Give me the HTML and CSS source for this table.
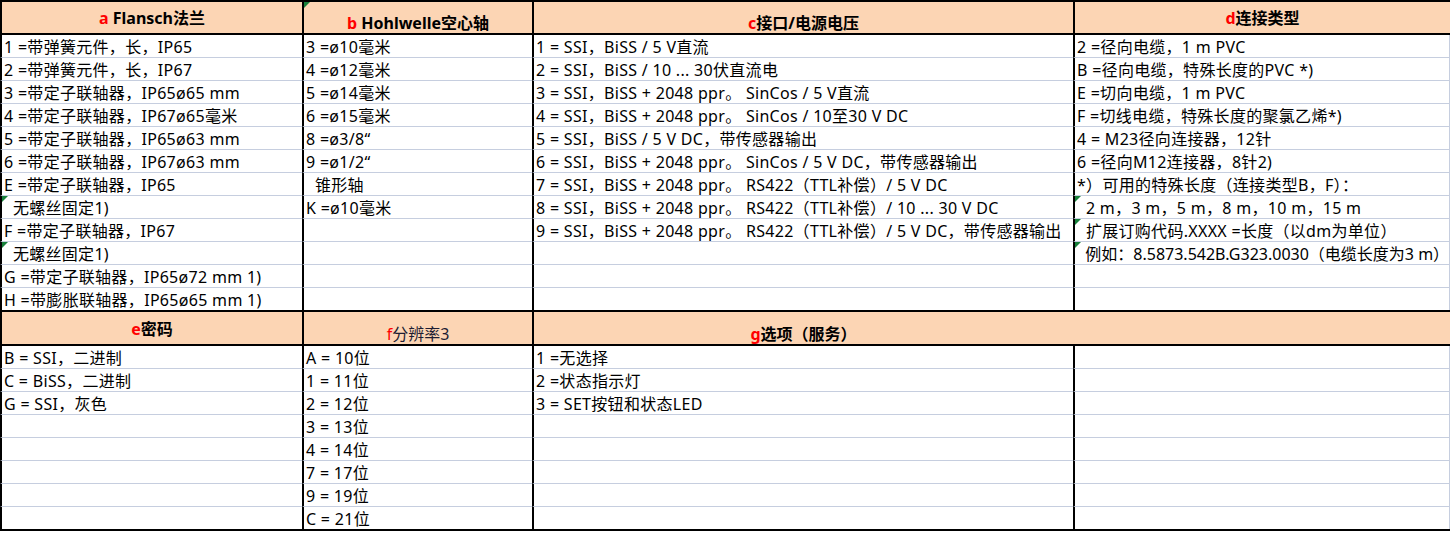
FILE: index.html
```html
<!DOCTYPE html>
<html lang="zh">
<head>
<meta charset="utf-8">
<title>Sheet</title>
<link rel="stylesheet" href="styles.css">
</head>
<body>
<div class="sheet">
  <div class="block top">
    <div class="col">
      <div class="hd mid"><span class="key">a</span>&nbsp;Flansch法兰</div>
      <div class="c">1 =带弹簧元件，长，IP65</div>
      <div class="c">2 =带弹簧元件，长，IP67</div>
      <div class="c">3 =带定子联轴器，IP65ø65 mm</div>
      <div class="c">4 =带定子联轴器，IP67ø65毫米</div>
      <div class="c">5 =带定子联轴器，IP65ø63 mm</div>
      <div class="c">6 =带定子联轴器，IP67ø63 mm</div>
      <div class="c">E =带定子联轴器，IP65</div>
      <div class="c flag">  无螺丝固定1)</div>
      <div class="c">F =带定子联轴器，IP67</div>
      <div class="c flag">  无螺丝固定1)</div>
      <div class="c">G =带定子联轴器，IP65ø72 mm 1)</div>
      <div class="c">H =带膨胀联轴器，IP65ø65 mm 1)</div>
    </div>
    <div class="col">
      <div class="hd low flag"><span class="key">b</span>&nbsp;Hohlwelle空心轴</div>
      <div class="c">3 =ø10毫米</div>
      <div class="c">4 =ø12毫米</div>
      <div class="c">5 =ø14毫米</div>
      <div class="c">6 =ø15毫米</div>
      <div class="c">8 =ø3/8“</div>
      <div class="c">9 =ø1/2“</div>
      <div class="c">  锥形轴</div>
      <div class="c">K =ø10毫米</div>
      <div class="c"></div>
      <div class="c"></div>
      <div class="c"></div>
      <div class="c"></div>
    </div>
    <div class="col">
      <div class="hd low"><span class="key">c</span>接口/电源电压</div>
      <div class="c">1 = SSI，BiSS / 5 V直流</div>
      <div class="c">2 = SSI，BiSS / 10 ... 30伏直流电</div>
      <div class="c">3 = SSI，BiSS + 2048 ppr。 SinCos / 5 V直流</div>
      <div class="c">4 = SSI，BiSS + 2048 ppr。 SinCos / 10至30 V DC</div>
      <div class="c">5 = SSI，BiSS / 5 V DC，带传感器输出</div>
      <div class="c">6 = SSI，BiSS + 2048 ppr。 SinCos / 5 V DC，带传感器输出</div>
      <div class="c">7 = SSI，BiSS + 2048 ppr。 RS422（TTL补偿）/ 5 V DC</div>
      <div class="c">8 = SSI，BiSS + 2048 ppr。 RS422（TTL补偿）/ 10 ... 30 V DC</div>
      <div class="c">9 = SSI，BiSS + 2048 ppr。 RS422（TTL补偿）/ 5 V DC，带传感器输出</div>
      <div class="c"></div>
      <div class="c"></div>
      <div class="c"></div>
    </div>
    <div class="col last">
      <div class="hd mid"><span class="key">d</span>连接类型</div>
      <div class="c">2 =径向电缆，1 m PVC</div>
      <div class="c">B =径向电缆，特殊长度的PVC *)</div>
      <div class="c">E =切向电缆，1 m PVC</div>
      <div class="c">F =切线电缆，特殊长度的聚氯乙烯*)</div>
      <div class="c">4 = M23径向连接器，12针</div>
      <div class="c">6 =径向M12连接器，8针2)</div>
      <div class="c">*）可用的特殊长度（连接类型B，F）：</div>
      <div class="c flag">  2 m，3 m，5 m，8 m，10 m，15 m</div>
      <div class="c flag">  扩展订购代码.XXXX =长度（以dm为单位）</div>
      <div class="c flag tight">  例如：8.5873.542B.G323.0030（电缆长度为3 m）</div>
      <div class="c"></div>
      <div class="c"></div>
    </div>
  </div>
  <div class="block bottom">
    <div class="col">
      <div class="hd mid"><span class="key">e</span>密码</div>
      <div class="c">B = SSI，二进制</div>
      <div class="c">C = BiSS，二进制</div>
      <div class="c">G = SSI，灰色</div>
      <div class="c"></div>
      <div class="c"></div>
      <div class="c"></div>
      <div class="c"></div>
      <div class="c"></div>
    </div>
    <div class="col">
      <div class="hd low plain"><span class="key">f</span><span class="dim">分辨率3</span></div>
      <div class="c">A = 10位</div>
      <div class="c">1 = 11位</div>
      <div class="c">2 = 12位</div>
      <div class="c">3 = 13位</div>
      <div class="c">4 = 14位</div>
      <div class="c">7 = 17位</div>
      <div class="c">9 = 19位</div>
      <div class="c">C = 21位</div>
    </div>
    <div class="col wide">
      <div class="hd low"><span class="key">g</span>选项（服务）</div>
      <div class="c">1 =无选择</div>
      <div class="c">2 =状态指示灯</div>
      <div class="c">3 = SET按钮和状态LED</div>
      <div class="c"></div>
      <div class="c"></div>
      <div class="c"></div>
      <div class="c"></div>
      <div class="c"></div>
    </div>
    <div class="col last">
      <div class="hd nob"></div>
      <div class="c"></div>
      <div class="c"></div>
      <div class="c"></div>
      <div class="c"></div>
      <div class="c"></div>
      <div class="c"></div>
      <div class="c"></div>
      <div class="c"></div>
    </div>
  </div>
</div>
</body>
</html>
```

FILE: styles.css
```css
* { box-sizing: border-box; }
html, body { margin: 0; padding: 0; background: #fff; }
body {
  font-family: "Noto Sans", "Noto Sans CJK SC", sans-serif;
  font-size: 16px;
  color: #000;
}
.sheet { width: 1450px; }
.block {
  display: grid;
  grid-template-columns: 302px 230px 541px 377px;
  border-top: 2px solid #000;
}
.block.bottom { border-bottom: 2px solid #000; }
.col { display: flex; flex-direction: column; }
.hd {
  position: relative;
  background: #fcd5b4;
  border-left: 2px solid #000;
  border-bottom: 2px solid #000;
  height: 33px;
  display: flex;
  justify-content: center;
  font-weight: bold;
  line-height: 20px;
  white-space: nowrap;
}
.bottom .hd { height: 34px; }
.hd.mid { align-items: center; }
.hd.low { align-items: flex-end; padding-bottom: 0; }
.bottom .hd.mid { padding-top: 1px; }
.hd.plain { font-weight: normal; }
.hd.nob { border-left: 0; }
.key { color: #ff0000; }
.dim { color: #1d1d33; }
.c {
  position: relative;
  height: 23px;
  line-height: 21px;
  padding-top: 2px;
  border-left: 2px solid #000;
  border-bottom: 1px solid #c6cedf;
  padding-left: 2px;
  letter-spacing: 0.3px;
  white-space: pre;
  overflow: visible;
}
.c.tight { letter-spacing: 0; }
.last .c { border-right: 1px solid #c6cedf; }
.top .c:last-child { border-bottom: 0; height: 22px; }
.bottom .c:last-child { border-bottom: 0; height: 22px; }
.flag::before {
  content: "";
  position: absolute;
  left: 0;
  top: 0;
  border-top: 6px solid #17803a;
  border-right: 6px solid transparent;
}
```
